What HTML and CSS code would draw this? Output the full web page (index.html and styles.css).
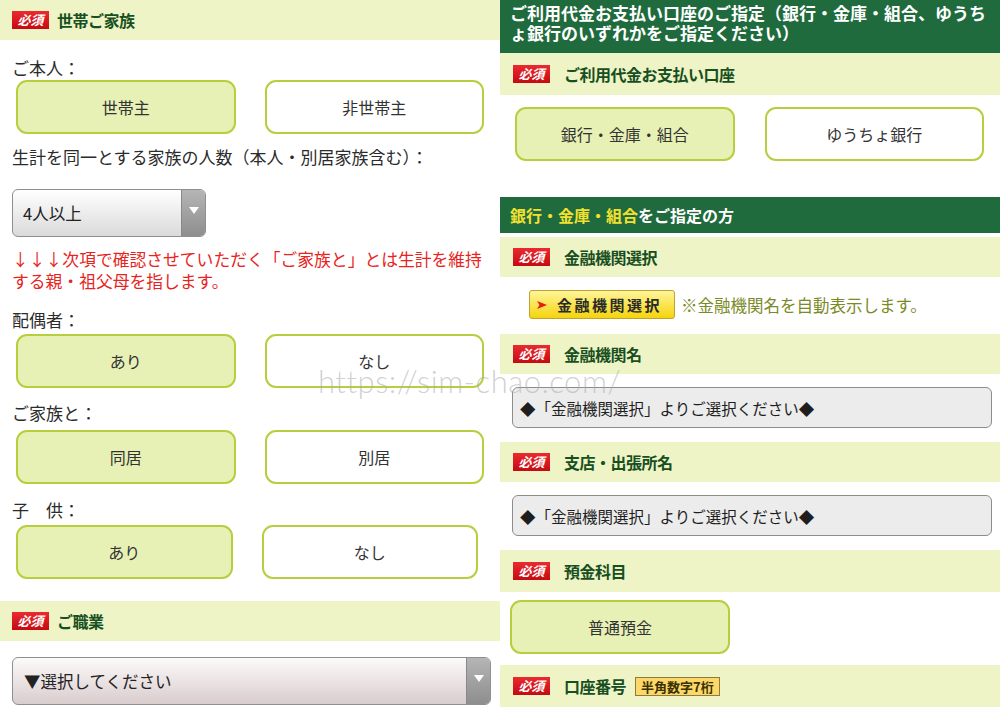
FILE: index.html
```html
<!DOCTYPE html>
<html lang="ja">
<head>
    <meta charset="UTF-8">
    <meta name="viewport" content="width=device-width, initial-scale=1.0">
    <title>お申し込みフォーム</title>
    <link rel="stylesheet" href="styles.css">
</head>
<body>
    <div class="page">
        <!-- 左：世帯・家族 -->
        <section class="panel">
            <div class="band"><span class="badge">必須</span><span class="band-title">世帯ご家族</span></div>

            <p class="label l-honnin">ご本人：</p>
            <div class="choices c-honnin">
                <div class="choice on">世帯主</div>
                <div class="choice">非世帯主</div>
            </div>

            <p class="label l-ninzu">生計を同一とする家族の人数（本人・別居家族含む）：</p>
            <div class="select small">
                <span class="select-text">4人以上</span>
                <span class="select-arrow"></span>
            </div>

            <p class="note">↓↓↓次項で確認させていただく「ご家族と」とは生計を維持<br>する親・祖父母を指します。</p>

            <p class="label l-haigu">配偶者：</p>
            <div class="choices c-haigu">
                <div class="choice on">あり</div>
                <div class="choice">なし</div>
            </div>

            <p class="label l-kazoku">ご家族と：</p>
            <div class="choices c-kazoku">
                <div class="choice on">同居</div>
                <div class="choice">別居</div>
            </div>

            <p class="label l-kodomo">子　供：</p>
            <div class="choices c-kodomo">
                <div class="choice on">あり</div>
                <div class="choice">なし</div>
            </div>

            <div class="band b-shokugyo"><span class="badge">必須</span><span class="band-title">ご職業</span></div>
            <div class="select wide">
                <span class="select-text">▼選択してください</span>
                <span class="select-arrow"></span>
            </div>
        </section>

        <!-- 右：支払い口座 -->
        <section class="panel">
            <div class="head">ご利用代金お支払い口座のご指定（銀行・金庫・組合、ゆうちょ銀行のいずれかをご指定ください）</div>

            <div class="band r tall"><span class="badge">必須</span><span class="band-title">ご利用代金お支払い口座</span></div>
            <div class="choices c-koza">
                <div class="choice on">銀行・金庫・組合</div>
                <div class="choice">ゆうちょ銀行</div>
            </div>

            <div class="sub-head"><em>銀行・金庫・組合</em>をご指定の方</div>

            <div class="band r b-kikan"><span class="badge">必須</span><span class="band-title">金融機関選択</span></div>
            <div class="pick-row">
                <div class="pick-btn">
                    <svg width="12" height="12" viewBox="0 0 12 12"><path d="M1 2 L11 6 L1 10 L3.5 6 Z" fill="#e8190f"/></svg>
                    金融機関選択
                </div>
                <span class="pick-note">※金融機関名を自動表示します。</span>
            </div>

            <div class="band r b-gap"><span class="badge">必須</span><span class="band-title">金融機関名</span></div>
            <div class="readonly">◆「金融機関選択」よりご選択ください◆</div>

            <div class="band r b-gap2"><span class="badge">必須</span><span class="band-title">支店・出張所名</span></div>
            <div class="readonly">◆「金融機関選択」よりご選択ください◆</div>

            <div class="band r b-gap2 tall"><span class="badge">必須</span><span class="band-title">預金科目</span></div>
            <div class="choices c-yokin">
                <div class="choice on">普通預金</div>
            </div>

            <div class="band r b-koza tall"><span class="badge">必須</span><span class="band-title">口座番号</span><span class="tag">半角数字7桁</span></div>
        </section>

        <div class="watermark">https://sim-chao.com/</div>
    </div>
</body>
</html>
```

FILE: styles.css
```css
body {
    margin: 0;
    background: #fff;
    font-family: "Noto Sans CJK JP", "Noto Sans", sans-serif;
    color: #2b2b2b;
}
.page {
    position: relative;
    display: flex;
    width: 1000px;
    height: 714px;
    overflow: hidden;
}
.panel {
    width: 500px;
    display: flex;
    flex-direction: column;
}

/* 見出し帯 */
.band {
    height: 40px;
    background: #eef4c5;
    display: flex;
    align-items: center;
    padding-left: 12px;
    flex-shrink: 0;
}
.band.r {
    padding-left: 13px;
}
.band.tall {
    height: 42px;
}
.badge {
    width: 37px;
    height: 18px;
    background: linear-gradient(#ea2a2f, #c60a12);
    color: #fff;
    font-size: 13px;
    font-weight: bold;
    font-style: italic;
    line-height: 18px;
    text-align: center;
}
.band-title {
    margin-left: 8px;
    font-size: 16px;
    font-weight: bold;
    color: #174f22;
    letter-spacing: -0.5px;
}
.band.r .band-title {
    margin-left: 14px;
}
.tag {
    margin-left: 9px;
    height: 17px;
    padding: 0 5px;
    background: #fcd86a;
    border: 1px solid #8e7a3a;
    font-size: 13px;
    font-weight: bold;
    line-height: 17px;
    color: #3a3000;
}

.label {
    margin: 0;
    padding: 0 12px;
    font-size: 17px;
    line-height: 22px;
}
.l-honnin { margin-top: 17px; }
.l-ninzu { margin-top: 12px; }
.l-haigu { margin-top: 17px; }
.l-kazoku { margin-top: 14px; }
.l-kodomo { margin-top: 15px; }

/* 選択ボタン */
.choices {
    display: flex;
    gap: 29px;
    padding: 0 16px;
}
.c-honnin { margin-top: 1px; }
.c-haigu { margin-top: 3px; }
.c-kazoku { margin-top: 6px; }
.c-kodomo { margin-top: 4px; padding-right: 22px; }
.c-koza { margin-top: 12px; padding-left: 15px; padding-right: 16px; gap: 30px; }
.c-yokin { margin-top: 8px; padding-left: 10px; width: 220px; }
.choice {
    flex: 1;
    height: 50px;
    border: 2px solid #b7cf3e;
    border-radius: 11px;
    background: #fff;
    display: flex;
    align-items: center;
    justify-content: center;
    font-size: 16px;
    color: #333;
}
.choice.on {
    background: #e7f1b6;
}

/* セレクト */
.select {
    display: flex;
    border: 1px solid #8f8f8f;
    border-radius: 6px;
    overflow: hidden;
    margin-left: 12px;
}
.select.small {
    width: 192px;
    height: 46px;
    margin-top: 21px;
    background: linear-gradient(#ffffff, #dadada);
}
.select.wide {
    width: 477px;
    height: 46px;
    margin-top: 16px;
    background: linear-gradient(#fdfafa, #d9cccd);
}
.select-text {
    flex: 1;
    padding-left: 10px;
    display: flex;
    align-items: center;
    font-size: 16.5px;
    color: #222;
}
.select.wide .select-text {
    padding-left: 11px;
}
.select-arrow {
    width: 23px;
    border-left: 1px solid #888;
    background: linear-gradient(#b5b5b5, #8e8e8e);
    position: relative;
}
.select-arrow::after {
    content: "";
    position: absolute;
    left: 7px;
    top: 17px;
    border-left: 5px solid transparent;
    border-right: 5px solid transparent;
    border-top: 7px solid #fff;
}

.note {
    margin: 11px 0 0;
    padding: 0 10px 0 12px;
    font-size: 16.8px;
    line-height: 22px;
    color: #e8231c;
    white-space: nowrap;
}

.b-shokugyo { margin-top: 22px; }

/* 右パネル */
.head {
    height: 53px;
    box-sizing: border-box;
    padding: 3px 10px 0;
    background: #1f6b3d;
    color: #fff;
    font-size: 17px;
    font-weight: bold;
    line-height: 20px;
}
.sub-head {
    margin-top: 36px;
    height: 36px;
    padding-left: 10px;
    background: #1f6b3d;
    color: #fff;
    font-size: 16px;
    font-weight: bold;
    line-height: 36px;
}
.sub-head em {
    font-style: normal;
    color: #f3e12f;
}
.b-kikan { margin-top: 4px; }
.pick-row {
    margin-top: 13px;
    padding-left: 29px;
    display: flex;
    align-items: center;
    gap: 6px;
}
.pick-btn {
    width: 146px;
    height: 29px;
    box-sizing: border-box;
    border: 1px solid #c2a22e;
    border-radius: 3px;
    background: linear-gradient(#fff59a, #f5d40c);
    display: flex;
    align-items: center;
    gap: 9px;
    padding-left: 6px;
    font-size: 15px;
    font-weight: bold;
    letter-spacing: 2.5px;
    color: #2a2a2a;
}
.pick-note {
    font-size: 16.5px;
    color: #7b8a26;
}
.b-gap { margin-top: 15px; }
.b-gap2 { margin-top: 14px; }
.b-koza { margin-top: 11px; }
.readonly {
    margin: 13px 8px 0 12px;
    height: 39px;
    border: 1px solid #8d8d8d;
    border-radius: 6px;
    background: #ececec;
    padding-left: 7px;
    display: flex;
    align-items: center;
    font-size: 15.5px;
    color: #1e1e1e;
}

/* 透かし */
.watermark {
    position: absolute;
    left: 318px;
    top: 362px;
    font-family: Lato, "Liberation Sans", sans-serif;
    font-weight: 300;
    font-size: 31px;
    color: rgba(170, 170, 170, 0.55);
    letter-spacing: 0.5px;
    pointer-events: none;
}
```
